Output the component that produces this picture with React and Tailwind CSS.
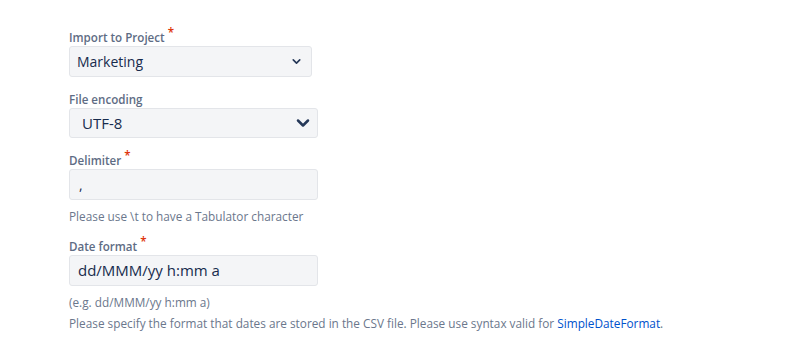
import React from "react";

function Chevron({ size }) {
  return (
    <svg width={size} height={size} viewBox="0 0 24 24" fill="none">
      <path
        d="M6 9l6 6 6-6"
        stroke="#253858"
        strokeWidth="3"
        strokeLinecap="round"
        strokeLinejoin="round"
      />
    </svg>
  );
}

function Label({ text, required }) {
  return (
    <div className="h-[16px] text-[11.6px] font-semibold leading-[16px] text-[#5e6c84]">
      {text}
      {required && (
        <span className="relative -top-[5px] ml-[3px] text-[#de350b]">*</span>
      )}
    </div>
  );
}

export default function App() {
  return (
    <div
      className="min-h-[349px] bg-white pl-[69px] pt-[30px]"
      style={{ fontFamily: '"Open Sans", "Liberation Sans", sans-serif' }}
    >
      <Label text="Import to Project" required />
      <div className="flex h-[31px] w-[243px] items-center justify-between rounded-[3px] border border-[#e3e5e9] bg-[#f4f5f7] pl-[7px] pr-[8px] text-[14px] text-[#172b4d]">
        <span>Marketing</span>
        <Chevron size={13} />
      </div>

      <div className="mt-[15px]">
        <Label text="File encoding" />
      </div>
      <div className="flex h-[30px] w-[249px] items-center justify-between rounded-[3px] border border-[#e3e5e9] bg-[#f4f5f7] pl-[12px] pr-[4px] text-[15px] text-[#172b4d]">
        <span>UTF-8</span>
        <Chevron size={20} />
      </div>

      <div className="mt-[15px]">
        <Label text="Delimiter" required />
      </div>
      <div className="flex h-[31px] w-[249px] items-center rounded-[3px] border border-[#e3e5e9] bg-[#f4f5f7] pl-[9px] text-[14px] text-[#172b4d]">
        ,
      </div>
      <div className="mt-[8px] text-[11.8px] leading-[16px] text-[#6b778c]">
        Please use \t to have a Tabulator character
      </div>

      <div className="mt-[15px]">
        <Label text="Date format" required />
      </div>
      <div className="flex h-[31px] w-[249px] items-center rounded-[3px] border border-[#e3e5e9] bg-[#f4f5f7] pl-[8px] text-[15px] text-[#172b4d]">
        dd/MMM/yy h:mm a
      </div>
      <div className="mt-[8px] text-[11.8px] leading-[16px] text-[#6b778c]">
        (e.g. dd/MMM/yy h:mm a)
      </div>
      <div className="mt-[5px] text-[11.8px] leading-[16px] text-[#6b778c]">
        Please specify the format that dates are stored in the CSV file. Please
        use syntax valid for{" "}
        <a className="text-[#0052cc]">SimpleDateFormat</a>.
      </div>
    </div>
  );
}
